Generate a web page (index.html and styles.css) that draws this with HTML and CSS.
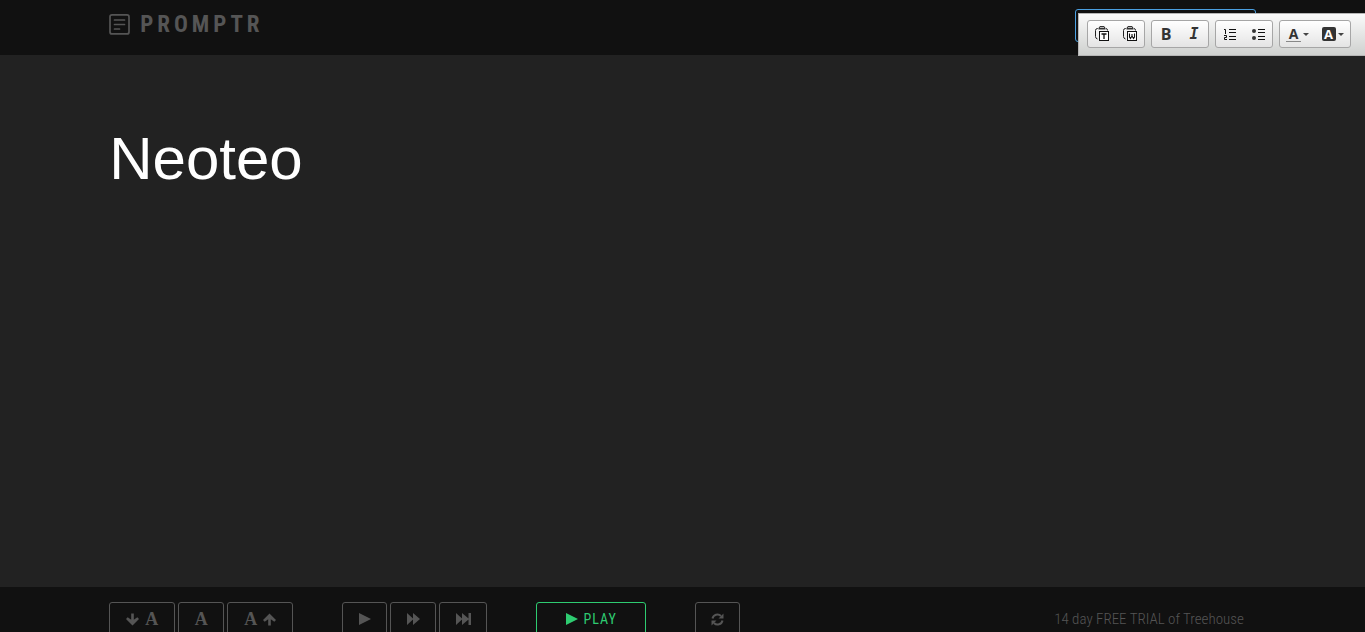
FILE: index.html
```html
<!DOCTYPE html>
<html lang="en">
<head>
<meta charset="utf-8">
<title>Promptr</title>
<link rel="stylesheet" href="styles.css">
</head>
<body>
<header class="header">
  <a class="logo" href="#">
    <svg class="logo-icon" width="22" height="22" viewBox="0 0 22 22" fill="none" stroke="currentColor" stroke-width="1.700"><rect x="1" y="0.900" width="19" height="19" rx="2"/><path d="M5.500 6h10M5.500 10.500h10M5.500 15h5" stroke-linecap="round"/></svg>
    <span>PROMPTR</span>
  </a>
  <button class="header-action" type="button" aria-label="Account"></button>
</header>

<div class="toolbar" role="toolbar" aria-label="Editor">
  <div class="tool-group">
    <button class="tool" type="button" aria-label="Paste as plain text"><svg width="16" height="16" viewBox="0 0 16 16"><path d="M4 2.500H3.500Q1.500 2.500 1.500 4.500v6q0 2 2 2.500M12 2.500q1.500 0 1.500 2" fill="none" stroke="#222"/><path d="M4.500 3.500V2L6 0h4l1.500 2v1.500z" fill="#333"/><path d="M6 1h4v1H6z" fill="#bbb"/><rect x="5.500" y="5.500" width="9" height="9" fill="#fff" stroke="#111"/><path d="M7.500 8h5M10 8v5" stroke="#111" stroke-width="1.300"/></svg></button>
    <button class="tool" type="button" aria-label="Paste from Word"><svg width="16" height="16" viewBox="0 0 16 16"><path d="M4 2.500H3.500Q1.500 2.500 1.500 4.500v6q0 2 2 2.500M12 2.500q1.500 0 1.500 2" fill="none" stroke="#222"/><path d="M4.500 3.500V2L6 0h4l1.500 2v1.500z" fill="#333"/><path d="M6 1h4v1H6z" fill="#bbb"/><rect x="5.500" y="5.500" width="9" height="9" fill="#fff" stroke="#111"/><path d="M7.500 7.500v3.500l1 1.500L10 10l1.500 2.500 1-1.500V7.500M10 8v3" fill="none" stroke="#111" stroke-width="1.100"/></svg></button>
  </div>
  <div class="tool-group">
    <button class="tool bold" type="button">B</button>
    <button class="tool italic" type="button">I</button>
  </div>
  <div class="tool-group">
    <button class="tool" type="button" aria-label="Numbered list"><svg width="16" height="16" viewBox="0 0 16 16" fill="none" stroke="#111"><path d="M2 3.500h1.500V8M2 9.500h2.500v2H2.500v2H5"/><path d="M7 3.500h7M7 6.500h7M7 10.500h7M7 13.500h7"/></svg></button>
    <button class="tool" type="button" aria-label="Bulleted list"><svg width="16" height="16" viewBox="0 0 16 16"><circle cx="4" cy="5" r="2" fill="#333"/><circle cx="4" cy="12" r="2" fill="#333"/><path d="M8 3.500h7M8 6.500h7M8 10.500h7M8 13.500h7" stroke="#111"/></svg></button>
  </div>
  <div class="tool-group colors">
    <button class="tool" type="button" aria-label="Text color"><span class="text-color">A</span><span class="caret"></span></button>
    <button class="tool" type="button" aria-label="Background color"><span class="back-color">A</span><span class="caret"></span></button>
  </div>
</div>

<main class="prompt" contenteditable="true"><p>Neoteo</p></main>

<footer class="footer">
  <div class="controls">
    <div class="group">
      <button class="button wide" type="button" aria-label="Smaller text"><svg width="13" height="13" viewBox="0 0 13 13"><path d="M5.200 0.500h2.600v6.300L11.300 4.300 13 6 6.500 12.500 0 6l1.700-1.700 3.500 2.500z"/></svg><span class="letter">A</span></button>
      <button class="button medium" type="button" aria-label="Default text"><span class="letter">A</span></button>
      <button class="button wide" type="button" aria-label="Larger text"><span class="letter">A</span><svg width="13" height="13" viewBox="0 0 13 13"><path d="M5.200 12.500h2.600V6.200l3.500 2.500L13 7 6.500 .5 0 7l1.700 1.700 3.500-2.500z"/></svg></button>
    </div>
    <div class="group">
      <button class="button small" type="button" aria-label="Slow"><svg width="12" height="12" viewBox="0 0 12 12"><path d="M0 0l12 6-12 6z"/></svg></button>
      <button class="button medium" type="button" aria-label="Medium"><svg width="13" height="12" viewBox="0 0 13 12"><path d="M0 0l6 5.500V0l7 6-7 6V6.500L0 12z"/></svg></button>
      <button class="button fast" type="button" aria-label="Fast"><svg width="15" height="12" viewBox="0 0 15 12"><path d="M0 0l6 5.500V0l6.500 5.500V0H15v12h-2.500V6.500L6 12V6.500L0 12z"/></svg></button>
    </div>
    <button class="button play" type="button"><svg width="12" height="12" viewBox="0 0 12 12"><path d="M0 0l12 6-12 6z"/></svg>PLAY</button>
    <button class="button small" type="button" aria-label="Reset"><svg width="13" height="13" viewBox="0 0 13 13"><path d="M1.500 5.500A5 5 0 0 1 10 3M11.500 7.500A5 5 0 0 1 3 10" fill="none" stroke="currentColor" stroke-width="2"/><path d="M12.500 .5v5h-5zM.5 12.500v-5h5z"/></svg></button>
  </div>
  <a class="trial" href="#">14 day FREE TRIAL of Treehouse</a>
</footer>
</body>
</html>
```
FILE: styles.css
```css
* { box-sizing: border-box; }
body {
  margin: 0;
  height: 100vh;
  display: flex;
  flex-direction: column;
  overflow: hidden;
  background: #222;
  color: #555;
  font-family: "Roboto Condensed", "Liberation Sans Narrow", Roboto, sans-serif;
}
a { color: inherit; text-decoration: none; }
button { font: inherit; color: inherit; }
svg { display: block; flex: none; }

.header {
  flex: none;
  display: flex;
  justify-content: space-between;
  align-items: flex-start;
  padding: 9px 8% 13px;
  background: #111;
}
.logo {
  display: flex;
  align-items: center;
  gap: 9px;
  font-size: 23px;
  font-weight: 700;
  line-height: 32px;
  letter-spacing: 4px;
}
.header-action {
  width: 181px;
  height: 33px;
  border: 1px solid #4a9fe0;
  border-radius: 3px;
  background: none;
}

.toolbar {
  position: fixed;
  top: 13px;
  right: 0;
  display: flex;
  gap: 6px;
  padding: 6px 14px 7px 8px;
  border: 1px solid #b6b6b6;
  border-right: 0;
  background: linear-gradient(#fafafa, #cfd1cf);
  color: #333;
}
.tool-group {
  display: flex;
  height: 28px;
  border: 1px solid #a6a6a6;
  border-radius: 3px;
  background: linear-gradient(#fff, #e4e4e4);
}
.tool {
  display: flex;
  align-items: center;
  justify-content: center;
  width: 28px;
  padding: 0;
  border: 0;
  background: none;
  font-weight: 700;
}
.bold { font-family: "Open Sans", sans-serif; font-size: 16px; }
.italic { font-family: "DejaVu Sans Mono", monospace; font-size: 15px; font-style: italic; }
.colors .tool { width: 35px; gap: 2px; font-family: "Open Sans", sans-serif; }
.text-color {
  width: 15px;
  border-bottom: 1px solid #888;
  font-size: 14px;
  line-height: 14px;
}
.back-color {
  width: 14px;
  border-radius: 2px;
  background: #333;
  color: #fff;
  font-size: 13px;
  line-height: 14px;
}
.caret {
  border: 3px solid transparent;
  border-top-color: #444;
  border-bottom: 0;
}

.prompt {
  flex: 1;
  min-height: 0;
  padding: 70px 8%;
  outline: 0;
  color: #fff;
  font-family: "Liberation Sans", Arial, sans-serif;
  font-size: 60px;
  line-height: 68px;
}
.prompt p { margin: 0; }

.footer {
  flex: 0 0 45px;
  display: flex;
  justify-content: space-between;
  align-items: flex-start;
  padding: 15px 8% 0;
  overflow: hidden;
  background: #111;
}
.controls { display: flex; gap: 49px; }
.group { display: flex; gap: 3px; }
.button {
  display: flex;
  align-items: center;
  justify-content: center;
  gap: 6px;
  height: 34px;
  padding: 0;
  border: 1px solid #555;
  border-radius: 3px;
  background: none;
}
.button svg { fill: currentColor; }
.small { width: 45px; }
.medium { width: 46px; }
.fast { width: 48px; }
.wide { width: 66px; }
.letter {
  font-family: "Liberation Serif", serif;
  font-size: 18px;
  font-weight: 700;
}
.play {
  width: 110px;
  border-color: #2ecc71;
  color: #2ecc71;
  font-size: 14px;
  letter-spacing: 1px;
}
.trial {
  padding: 0 12px;
  font-size: 15px;
  font-weight: 300;
  line-height: 34px;
}
```
